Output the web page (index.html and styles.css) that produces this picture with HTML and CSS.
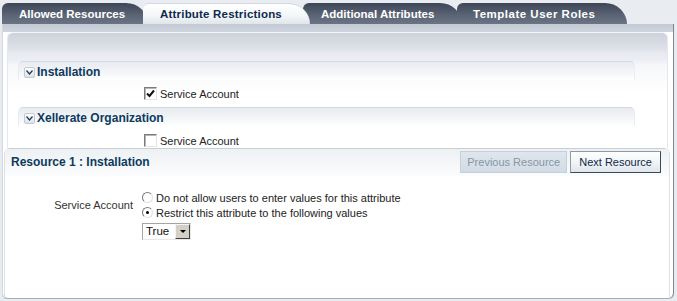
FILE: index.html
```html
<!DOCTYPE html>
<html lang="en">
<head>
    <meta charset="UTF-8">
    <title>Attribute Restrictions</title>
    <link rel="stylesheet" href="styles.css">
</head>
<body>
    <div class="tabs">
        <div class="tab tab-1">Allowed Resources</div>
        <div class="tab tab-active">Attribute Restrictions</div>
        <div class="tab tab-3">Additional Attributes</div>
        <div class="tab tab-4">Template User Roles</div>
    </div>

    <div class="panel">
        <div class="panel-top"></div>

        <div class="summary">
            <div class="section-head">
                <span class="toggle">
                    <svg width="7" height="5" viewBox="0 0 7 5"><path d="M0.5 0.5 L3.5 4 L6.5 0.5" fill="none" stroke="#1d3550" stroke-width="1.2"/></svg>
                </span>
                <span class="section-title">Installation</span>
            </div>
            <div class="check-row">
                <span class="check">
                    <svg width="9" height="9" viewBox="0 0 9 9"><path d="M1 4.5 L3.5 7 L8 1.5" fill="none" stroke="#111" stroke-width="2"/></svg>
                </span>
                <span>Service Account</span>
            </div>

            <div class="section-head">
                <span class="toggle">
                    <svg width="7" height="5" viewBox="0 0 7 5"><path d="M0.5 0.5 L3.5 4 L6.5 0.5" fill="none" stroke="#1d3550" stroke-width="1.2"/></svg>
                </span>
                <span class="section-title">Xellerate Organization</span>
            </div>
            <div class="check-row check-row-last">
                <span class="check"></span>
                <span>Service Account</span>
            </div>
        </div>

        <div class="resource">
            <div class="resource-head">
                <span class="resource-title">Resource 1 : Installation</span>
                <div class="buttons">
                    <button class="btn btn-disabled">Previous Resource</button>
                    <button class="btn">Next Resource</button>
                </div>
            </div>

            <div class="attr">
                <div class="attr-label">Service Account</div>
                <div class="attr-options">
                    <div class="radio-row"><span class="radio"></span>Do not allow users to enter values for this attribute</div>
                    <div class="radio-row"><span class="radio radio-on"></span>Restrict this attribute to the following values</div>
                    <div class="select">
                        <span class="select-value">True</span>
                        <span class="select-btn"></span>
                    </div>
                </div>
            </div>
        </div>
    </div>
</body>
</html>
```

FILE: styles.css
```css
body {
    margin: 0;
    padding-top: 3px;
    background-color: #e9edf1;
    font-family: "Liberation Sans", Arial, sans-serif;
    font-size: 11px;
    color: #333;
}
.tabs {
    display: flex;
    height: 21px;
    padding-left: 2px;
}
.tab {
    height: 21px;
    line-height: 22px;
    padding-left: 17px;
    border-radius: 6px 22px 0 0 / 6px 21px 0 0;
    background: linear-gradient(#3e4757, #5c6576 60%, #6b7485);
    color: #fff;
    font-weight: bold;
    font-size: 11.5px;
    white-space: nowrap;
    box-sizing: border-box;
}
.tab-1 {
    z-index: 1;
    width: 146px;
}
.tab-active {
    z-index: 3;
    width: 167px;
    margin-left: -5px;
    padding-left: 17px;
    background: linear-gradient(#ffffff, #f3f6f8 60%, #dfe5ea);
    border-top: 1px solid #d3d9df;
    line-height: 20px;
    color: #0d2a4f;
    letter-spacing: 0.2px;
}
.tab-3 {
    z-index: 1;
    width: 159px;
    margin-left: -7px;
    padding-left: 18px;
}
.tab-4 {
    z-index: 2;
    width: 170px;
    margin-left: -5px;
    padding-left: 16px;
    letter-spacing: 0.5px;
}
.panel {
    margin: 0 3px 0 2px;
    height: 275px;
    box-sizing: border-box;
    display: flex;
    flex-direction: column;
    background-color: #fff;
    border-left: 1px solid #d4dae1;
    border-right: 1px solid #7e8792;
    border-bottom: 1px solid #a6aeb7;
    border-radius: 0 0 6px 6px;
    box-shadow: 0 1px 1px #c9d0d7;
}
.panel-top {
    height: 8px;
    background: linear-gradient(#c3cad4, #cfd5de);
}
.summary {
    margin: 0 5px 0 4px;
    padding: 28px 0 0 10px;
    border-top: 1px solid #f3f5f8;
    border-left: 1px solid #e4e8ed;
    border-right: 1px solid #e4e8ed;
    border-radius: 6px 6px 0 0;
    background: linear-gradient(#cdd3dc, #dde1e8 16px, #e8eaf0 20px, #eceef3 27px, #f6f7f9 32px, #fff 60px);
}
.section-head {
    display: flex;
    align-items: center;
    height: 19px;
    padding: 2px 0 0 5px;
    margin-right: 32px;
    box-sizing: border-box;
    border-top: 1px solid #d5dae2;
    border-left: 1px solid #e9ecf0;
    border-right: 1px solid #e9ecf0;
    border-radius: 5px 5px 0 0;
    background: linear-gradient(#e8ebf0, #f4f6f8 60%, #fff);
}
.toggle {
    width: 11px;
    height: 11px;
    box-sizing: border-box;
    border: 1px solid #c2c9d2;
    border-radius: 2px;
    background: linear-gradient(#ffffff, #dde2e8);
    display: flex;
    align-items: center;
    justify-content: center;
    margin-right: 2px;
}
.section-title {
    font-weight: bold;
    font-size: 12px;
    color: #0d3a5e;
}
.check-row {
    display: flex;
    align-items: center;
    height: 27px;
    padding-left: 126px;
    color: #222;
}
.check-row-last {
    height: 21px;
    align-items: flex-end;
    padding-bottom: 1px;
}
.check {
    width: 13px;
    height: 13px;
    box-sizing: border-box;
    border: 1px solid;
    border-color: #7b7b7b #e4e4e4 #e4e4e4 #7b7b7b;
    background: #fff;
    box-shadow: inset 1px 1px 0 #b5b5b5;
    display: flex;
    align-items: center;
    justify-content: center;
    margin-right: 3px;
}
.resource {
    flex: 1;
    margin: 0 3px 0 1px;
    border-top: 1px solid #c9ced6;
    border-left: 1px solid #dce1e7;
    border-right: 1px solid #dce1e7;
    border-radius: 6px 6px 0 0;
}
.resource-head {
    display: flex;
    justify-content: space-between;
    align-items: flex-start;
    height: 25px;
    padding: 2px 8px 0 6px;
    background: linear-gradient(#eef1f4, #fbfcfd);
}
.resource-title {
    font-weight: bold;
    font-size: 12px;
    color: #0d3a5e;
    margin-top: 4px;
}
.buttons {
    display: flex;
    gap: 3px;
}
.btn {
    height: 22px;
    padding: 0 8px;
    font-family: "Liberation Sans", Arial, sans-serif;
    font-size: 11px;
    white-space: nowrap;
    border: 1px solid #8f9aa7;
    border-right-color: #3c485a;
    border-bottom-color: #3c485a;
    background: linear-gradient(#ffffff, #eef2f5 60%, #dfe5eb);
    color: #0f2847;
}
.btn-disabled {
    width: 107px;
    padding: 0;
    border-color: #c7d0da;
    background: linear-gradient(#dfe6ec, #d2dbe4);
    color: #8795a6;
}
.attr {
    display: flex;
    align-items: flex-start;
    padding-top: 14px;
}
.attr-label {
    width: 128px;
    text-align: right;
    margin-top: 9px;
    margin-right: 9px;
    color: #333;
}
.radio-row {
    display: flex;
    align-items: center;
    height: 15px;
    color: #222;
}
.radio {
    width: 11px;
    height: 11px;
    box-sizing: border-box;
    border-radius: 50%;
    border: 1px solid;
    border-color: #7b7b7b #e0e0e0 #e0e0e0 #7b7b7b;
    background: #fff;
    margin-right: 3px;
    display: flex;
    align-items: center;
    justify-content: center;
}
.radio-on::before {
    content: "";
    width: 3px;
    height: 3px;
    border-radius: 50%;
    background: #000;
}
.select {
    display: flex;
    width: 49px;
    height: 17px;
    box-sizing: border-box;
    margin-top: 3px;
    border: 1px solid;
    border-color: #a5a5a5 #e8e8e8 #e8e8e8 #a5a5a5;
    background: #fff;
}
.select-value {
    flex: 1;
    padding-left: 3px;
    line-height: 15px;
    font-size: 11.5px;
    color: #111;
}
.select-btn {
    width: 15px;
    height: 15px;
    box-sizing: border-box;
    border: 1px solid;
    border-color: #f5f5f5 #404040 #404040 #f5f5f5;
    background: #d4d0c8;
    display: flex;
    align-items: center;
    justify-content: center;
}
.select-btn::before {
    content: "";
    border-left: 3px solid transparent;
    border-right: 3px solid transparent;
    border-top: 3px solid #000;
}
```
